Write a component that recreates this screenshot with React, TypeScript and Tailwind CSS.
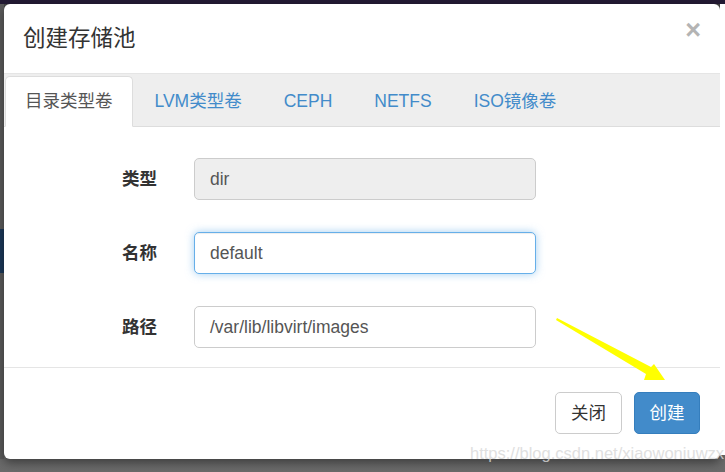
import React from 'react'

const font = { fontFamily: '"Liberation Sans", Arial, "Noto Sans CJK SC", sans-serif' }

const tabs = ['目录类型卷', 'LVM类型卷', 'CEPH', 'NETFS', 'ISO镜像卷']

function Field({ label, value, variant }: { label: string; value: string; variant: 'disabled' | 'focus' | 'plain' }) {
    const box =
        variant === 'disabled'
            ? 'bg-[#eeeeee] border-[#cccccc]'
            : variant === 'focus'
              ? 'bg-white border-[#66afe9] shadow-[inset_0_1px_1px_rgba(0,0,0,0.075),0_0_8px_rgba(102,175,233,0.6)]'
              : 'bg-white border-[#cccccc]'
    return (
        <div className="flex items-center">
            <div className="w-[153px] text-right text-[17.5px] font-bold text-[#333]">{label}</div>
            <div className={`ml-[37px] w-[342px] h-[42px] border rounded-[5px] flex items-center px-[15px] text-[17.5px] text-[#555] ${box}`}>
                {value}
            </div>
        </div>
    )
}

export default function App() {
    return (
        <div className="relative w-[725px] h-[472px] overflow-hidden bg-gradient-to-b from-[#444] to-[#6a6a6a]" style={font}>
            <div className="h-[4px] bg-[#231a33]" />
            <div className="flex">
                <div className="w-[4px] flex flex-col h-[455px]">
                    <div className="h-[225px] bg-[#5a5a5a]" />
                    <div className="h-[44px] bg-[#1b3858]" />
                    <div className="flex-1 bg-[#5a5a5a]" />
                </div>
                <div className="w-[716px] h-[455px] bg-white rounded-[6px] flex flex-col shadow-[0_4px_10px_rgba(0,0,0,0.4)]">
                    <div className="h-[70px] shrink-0 pl-[19px] pr-[19px] flex items-center justify-between border-b border-[#e5e5e5]">
                        <div className="text-[22.5px] text-[#333]">创建存储池</div>
                        <div className="text-[27px] leading-none font-bold text-[#b4b4b4] -mt-[16px]">×</div>
                    </div>
                    <div className="h-[53px] shrink-0 bg-[#eeeeee] border-b border-[#dddddd] flex items-end pl-[1px]">
                        {tabs.map((t, i) => (
                            <div
                                key={t}
                                className={`h-[51px] -mb-[1px] mr-[2px] px-[19px] flex items-center text-[17.5px] border rounded-t-[5px] ${
                                    i === 0 ? 'bg-white border-[#dddddd] border-b-white text-[#555]' : 'border-transparent text-[#428bca]'
                                }`}
                            >
                                {t}
                            </div>
                        ))}
                    </div>
                    <div className="flex flex-col gap-[32px] pt-[31px] pb-[19px] border-b border-[#e5e5e5]">
                        <Field label="类型" value="dir" variant="disabled" />
                        <Field label="名称" value="default" variant="focus" />
                        <Field label="路径" value="/var/lib/libvirt/images" variant="plain" />
                    </div>
                    <div className="flex justify-end gap-[12px] pt-[24px] pr-[20px]">
                        <div className="w-[67px] h-[42px] border border-[#cccccc] rounded-[5px] flex items-center justify-center text-[17.5px] text-[#333] bg-white">
                            关闭
                        </div>
                        <div className="w-[66px] h-[42px] border border-[#357ebd] rounded-[5px] flex items-center justify-center text-[17.5px] text-white bg-[#428bca]">
                            创建
                        </div>
                    </div>
                </div>
                <div className="w-[5px] h-[451px] bg-white" />
            </div>
            <div className="absolute left-[470px] top-[441px] text-[16.5px] text-[#d8d8d8] opacity-80">https://blog.csdn.net/xiaowoniuwzx</div>
            <svg className="absolute left-0 top-0" width="725" height="472" viewBox="0 0 725 472">
                <polygon points="556,320 557,318 651,367 654,364 665,380 644,380 646,374" fill="#ffff00" />
            </svg>
        </div>
    )
}
